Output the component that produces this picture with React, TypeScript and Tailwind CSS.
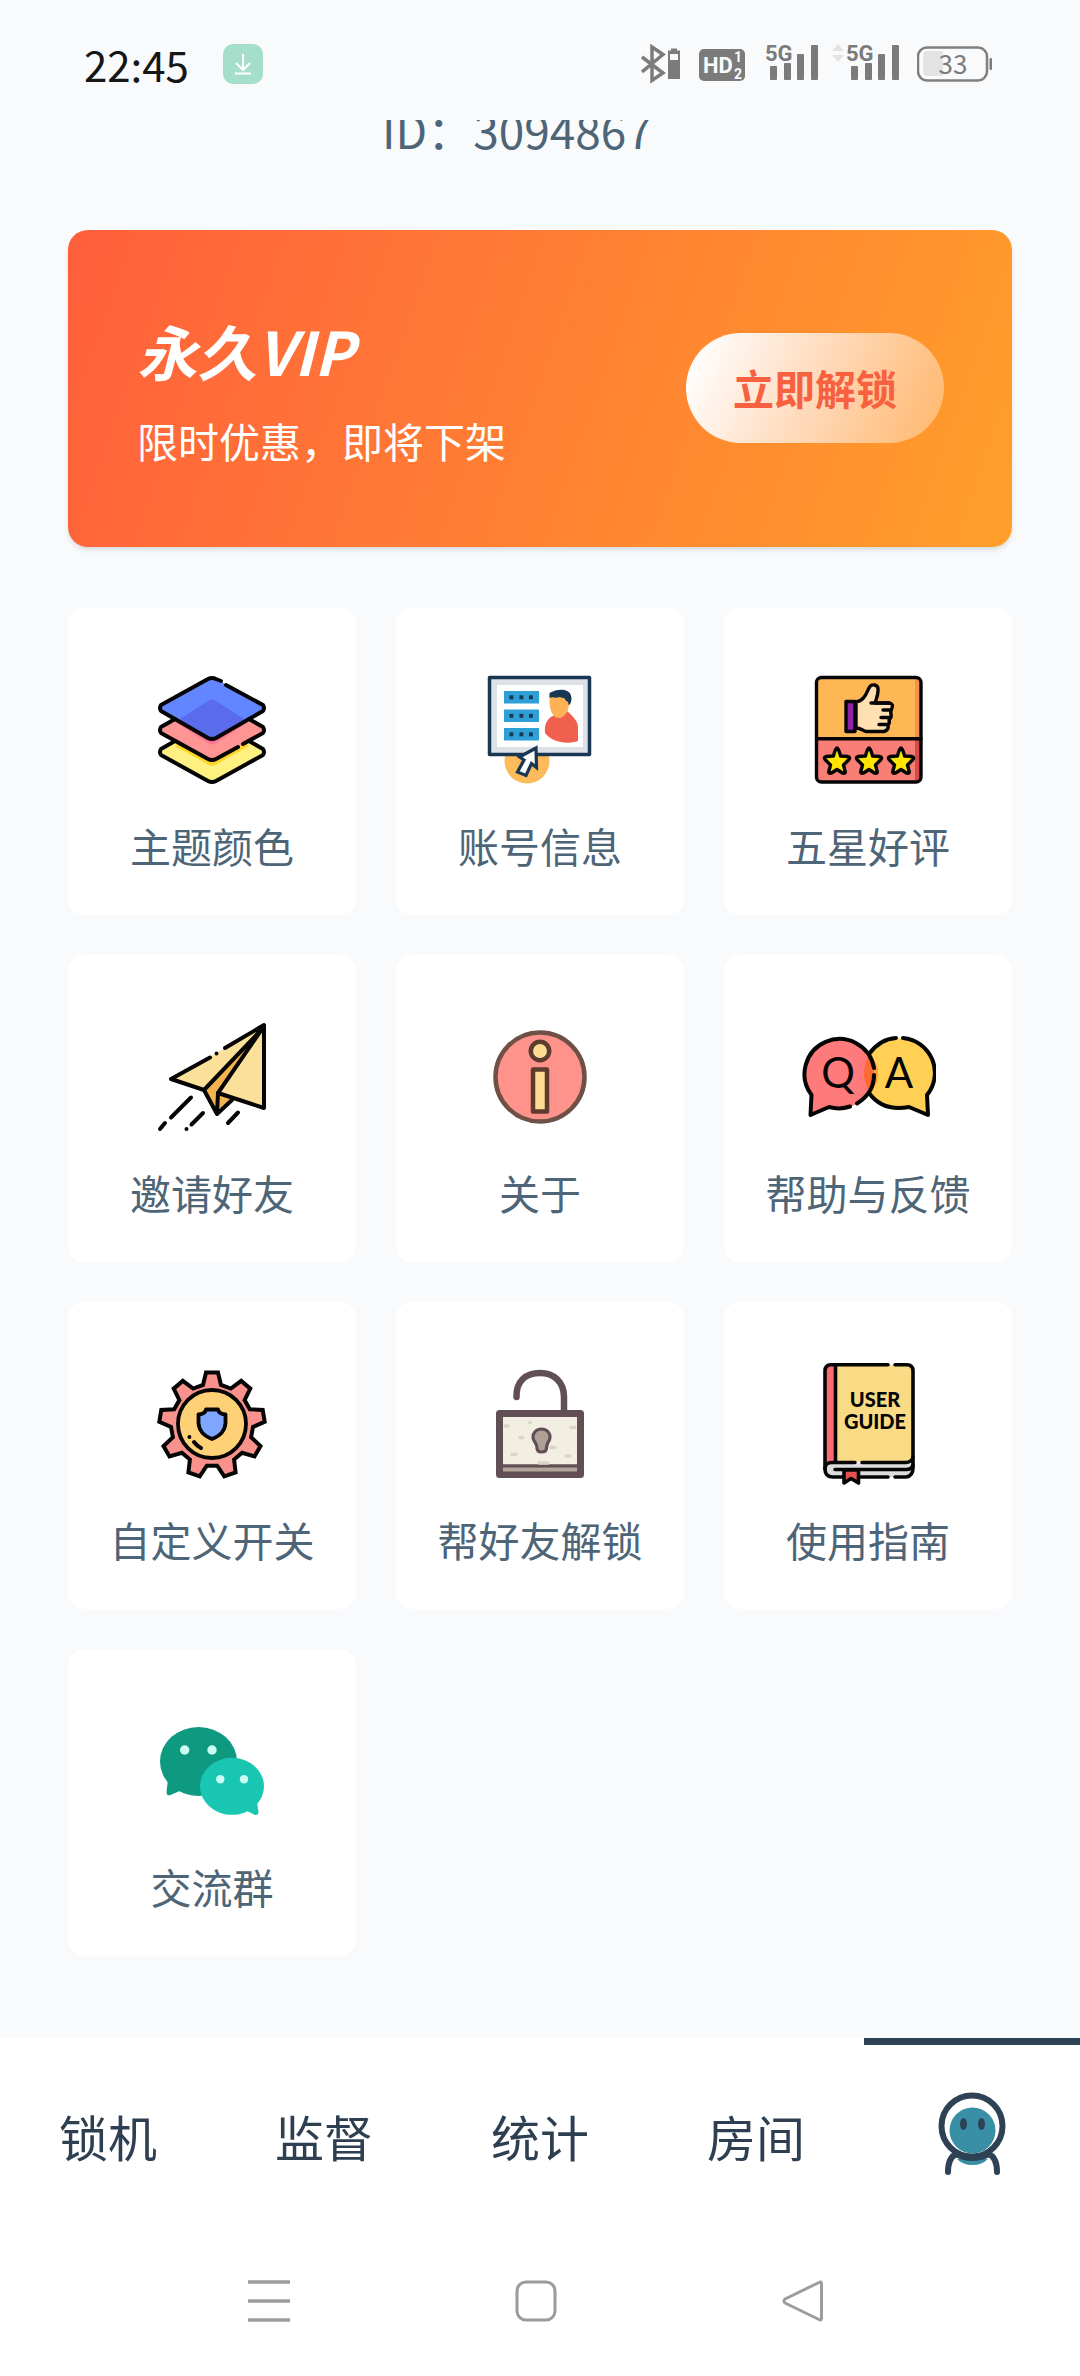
import type { ReactNode } from "react";

const INK = "#050505";

function Icon({ children }: { children: ReactNode }) {
  return (
    <svg
      viewBox="0 0 136 136"
      className="size-[136px]"
      fill="none"
      strokeLinecap="round"
      strokeLinejoin="round"
      aria-hidden="true"
    >
      {children}
    </svg>
  );
}

function LayersIcon() {
  return (
    <Icon>
      <path d="M17 87 Q15 90 17 93 L64 119 Q68 121 72 119 L119 93 Q121 90 119 87 L68 60Z" fill="#fff082" />
      <path d="M31 80 L65 99 Q68 101 71 99 L105 80 L101 76 L35 76Z" transform="translate(0 4)" fill="#ffd52a" />
      <path d="M17 65 Q15 68 17 71 L64 98 Q68 100 72 98 L119 71 Q121 68 119 65 L68 38Z" fill="#ff9494" />
      <path d="M30 59 L66 82 Q68 83 70 82 L106 59Z" fill="#ff6f91" />
      <path d="M17 43 Q15 46 17 49 L64 76 Q68 78 72 76 L119 49 Q121 46 119 43 L72 17 Q68 15 64 17Z" fill="#6186ff" />
      <path d="M34 58 L64 39 Q68 36 72 39 L102 58 L72 75 Q68 77 64 75Z" fill="#5a6cec" />
      <g stroke={INK} strokeWidth="4">
        <path d="M77 19 L72 17 Q68 15 64 17 L17 43 Q15 46 17 49 L64 76 Q68 78 72 76 L119 49 Q121 46 119 43 L82 23" />
        <path d="M31 57 L17 65 Q15 68 17 71 L64 97 Q68 99 72 97 L94 85 M99 82 L119 71 Q121 68 119 65 L105 57" />
        <path d="M31 79 L17 87 Q15 90 17 93 L64 119 Q68 121 72 119 L119 93 Q121 90 119 87 L105 79" />
      </g>
    </Icon>
  );
}

function AccountIcon() {
  return (
    <Icon>
      <circle cx="55" cy="99" r="22.5" fill="#fdbb5b" />
      <rect x="17.5" y="15.5" width="100" height="77" fill="#dfe1e8" stroke="#173753" strokeWidth="3.5" />
      <rect x="25" y="23" width="86" height="62" fill="#fff" />
      {[29, 47.5, 66].map((y) => (
        <g key={y}>
          <rect x="32" y={y} width="35" height="12.5" fill="#2f9fd8" />
          {[37.5, 47.5, 57].map((x) => (
            <rect key={x} x={x} y={y + 4.3} width="3.8" height="4" fill="#173753" />
          ))}
        </g>
      ))}
      <path d="M95 49 C102 55 106 60 106 65 L106 79 C94 83 80 80 73 71 C72 60 77 55 83 53 L88 56Z" fill="#f1604f" />
      <path d="M78 35 C76 45 80 56 87 56 C93 55 96 50 97 43 L97 34 L90 31Z" fill="#fdb355" />
      <path d="M77.5 36 V31 C86 26 99 26 99.500 36 C99.500 40 98 43 97 43 C96 42 97 39 94 39 C93 35 90 36 87 35 C84 37 81 34 77.500 36Z" fill="#173753" />
      <path d="M64 86 L47.5 95 L52 98 L45.5 110 L54 113.500 L59.500 101.500 L64.500 105.500Z" fill="#fff" stroke="#173753" strokeWidth="3.2" strokeLinejoin="miter" />
    </Icon>
  );
}

const STAR =
  "M0 -13 Q1.500 -13 3.600 -5 L11 -4.500 Q14 -3.500 11.500 -1 L6.500 4 L8.300 11 Q8 13 5.500 12 L0 8.500 L-5.500 12 Q-8 13 -8.300 11 L-6.500 4 L-11.500 -1 Q-14 -3.500 -11 -4.500 L-3.600 -5 Q-1.500 -13 0 -13Z";

function RatingIcon() {
  return (
    <Icon>
      <path d="M17 77 V21 Q17 16 22 16 H116 Q121 16 121 21 V77Z" fill="#ffb755" />
      <path d="M17 77 V115 Q17 120 22 120 H116 Q121 120 121 115 V77Z" fill="#f87e76" />
      <path d="M115 17 H121 V77 H115Z" fill="#ef9545" />
      <path d="M115 77 H121 V117 L115 119Z" fill="#d44b4b" />
      <g stroke={INK} strokeWidth="3.4">
        <rect x="16.500" y="15.500" width="104.500" height="104.500" rx="5" />
        <path d="M17 76.700 H121" />
        <path
          d="M56 40 C64 39 66 32 69 26 C71 21 79 22 78 29 C78 34 76 37 75 41 L89 41 Q94 42 92 46 Q90 49 91 52 Q92 55 89 58 Q90 61 88 63 Q89 68 84 69.500 H66 C62 68 61 66 56 66Z"
          fill="#ffe0b2"
        />
        <path d="M71 41 H89 M83 48 H91 M81 55.500 H90 M79 62.500 H88" />
        <rect x="46" y="39.500" width="9" height="30" fill="#8e24aa" />
        {[37, 69, 101].map((x) => (
          <path key={x} d={STAR} transform={`translate(${x} 99)`} fill="#ffe500" />
        ))}
      </g>
    </Icon>
  );
}

function PlaneIcon() {
  return (
    <Icon>
      <path d="M120 17 L27 70 L60 81Z M120 17 V99 L74 84Z" fill="#fbe09a" />
      <path d="M120 17 L60 81 L73 105 L89 90 L74 84Z" fill="#f3b350" />
      <g stroke={INK} strokeWidth="4">
        <path d="M81 39 L120 16 V99 L74 84 L118 20 L60 81 L27 70 L66 48.500 M72.500 44.500 V44.400" />
        <path d="M60 81 L73 105 L74 84 M73 105 L88 91" />
        <path d="M47 88.500 L27 108.500 M21 114 L16 120 M59 104 L47.500 115.500 M42.500 120 V119.900 M94 103.500 L84 114" />
      </g>
    </Icon>
  );
}

function InfoIcon() {
  return (
    <Icon>
      <circle cx="68" cy="68" r="44.500" fill="#ff938b" stroke="#6f5046" strokeWidth="4.500" />
      <g fill="#fddb93" stroke="#5d3b2e" strokeWidth="4.500">
        <circle cx="68" cy="42" r="9.200" />
        <rect x="61" y="60.500" width="14" height="42" />
      </g>
    </Icon>
  );
}

function QaIcon() {
  return (
    <Icon>
      <path d="M127 86 A35 35 0 1 0 109 98 L128 106Z" fill="#ffd054" />
      <path d="M11.500 86 A35 35 0 1 1 29 98 L10.500 106Z" fill="#ff7b7b" />
      <path d="M69 46 A35 35 0 0 1 69 82 A35 35 0 0 1 69 46Z" fill="#ff6a34" />
      <path d="M69 45 Q79 54 78 66 Q77 78 69 84 Q75 76 74.500 64 Q74 54 69 45Z" fill="#ff9a38" />
      <g stroke={INK} strokeWidth="4">
        <path d="M74 59 A35 35 0 1 0 11.500 86 L10.500 106 L29 98 Q40 101 50 97.500 M57 94.500 Q74 84 74 66" />
        <path d="M69 45 Q80 30 96 29 M103 29 A35 35 0 0 1 127 86 L128 106 L109 98 Q83 103 69 84" />
      </g>
      <g fill={INK} className="font-[Lato] text-[42px]" textAnchor="middle">
        <text x="38" y="79">Q</text>
        <text x="99" y="79">A</text>
      </g>
    </Icon>
  );
}

const GEAR = Array.from({ length: 9 }, (_, i) => {
  const a = (i * 40 * Math.PI) / 180;
  const at = (x: number, y: number) =>
    `${(68 + x * Math.cos(a) - y * Math.sin(a)).toFixed(1)} ${(69 + x * Math.sin(a) + y * Math.cos(a)).toFixed(1)}`;
  return `${i ? "L" : "M"}${at(-9, -40)} L${at(-6, -52.5)} L${at(6, -52.5)} L${at(9, -40)}`;
}).join(" ") + "Z";

function SwitchIcon() {
  return (
    <Icon>
      <path d={GEAR} fill="#f9928c" stroke={INK} strokeWidth="4" strokeLinejoin="miter" />
      <circle cx="68" cy="68" r="34" fill="#ffd176" stroke={INK} strokeWidth="3.800" />
      <path
        d="M62 53.500 H74 Q75 58 81.500 58.500 V67 C81 75 76 80 68 83 C60 80 55 75 54.500 67 V58.500 Q61 58 62 53.500Z"
        fill="#7fa6ff"
        stroke={INK}
        strokeWidth="3.800"
      />
      <path d="M45.400 81 V80.900 M50 86 Q53 90 57 92" stroke={INK} strokeWidth="4" />
    </Icon>
  );
}

function UnlockIcon() {
  return (
    <Icon>
      <path d="M44.500 41 C44 25 54 17 68 17 C82 17 92 26 92 41 V56" stroke="#614f55" strokeWidth="6.500" />
      <rect x="27.500" y="57.500" width="81" height="61" fill="#f2eee1" stroke="#614f55" strokeWidth="7" />
      <path d="M31 112 H105 V115.500 H31Z" fill="#b3a597" />
      <path d="M31 110 H105" stroke="#614f55" strokeWidth="3.500" />
      <path
        d="M33 70 H36 M99 71.500 H103 M48 81.500 H51 M40 98.500 H44 M94 100 H98 M79 91.500 H83 M67 107 H76 M58 66.500 V66.400"
        stroke="#d9d7c2"
        strokeWidth="3.500"
      />
      <path
        d="M69.500 73 C75 73 78 77 78 81 C78 86 74.500 86 74.500 92 C74.500 95 72 96 69.500 96 C67 96 65 95 65 92 C65 86 61 86 61 81 C61 77 64 73 69.500 73Z"
        fill="#b0a094"
        stroke="#614f55"
        strokeWidth="3.200"
      />
    </Icon>
  );
}

function GuideIcon() {
  return (
    <Icon>
      <path d="M35 9 H107 Q113 9 113 15 V106 H35Z" fill="#f9da85" />
      <path d="M25 112 V15 Q25 9 31 9 H35 V106 Q27 106 25 112Z" fill="#fb6b70" />
      <path d="M113 104 Q112 107 107 107 H34 Q26 107 26 114 Q26 121 34 121 H107 Q113 121 113 114Z" fill="#dddde0" />
      <g stroke={INK} strokeWidth="3.600">
        <path d="M88 8.800 H31 Q25 9 25 15 V113 Q25 121 33 121 H88 M95 121 H106 Q113 120 113 112 V15 Q113 9 107 8.800 H95" />
        <path d="M35.500 9 V106 M25 113 Q25 106 33 106.500 H55 M62 106.500 H106 Q112 106 113 101 M35 113.500 H107 Q112 113 113 109" />
        <path d="M44 114 V127 L51 122.500 L58.500 127 V114Z" fill="#e2504f" />
      </g>
      <g fill={INK} className="font-[Lato] text-[20px] font-black" textAnchor="middle">
        <text x="75" y="51">USER</text>
        <text x="75" y="73">GUIDE</text>
      </g>
    </Icon>
  );
}

function ChatIcon() {
  return (
    <Icon>
      <g fill="#0d9a80">
        <ellipse cx="54.500" cy="58.500" rx="38.500" ry="34.500" />
        <path d="M24 76 L22.500 89 Q22.500 93 26.500 92 L38 87Z" />
      </g>
      <g fill="#19c6b2">
        <ellipse cx="88" cy="83.300" rx="32" ry="28.500" />
        <path d="M113 99 L114.500 109 Q114.500 112.500 111 112 L101 107Z" />
      </g>
      <g fill="#cbfdf5">
        <circle cx="40.700" cy="47" r="4.700" />
        <circle cx="68" cy="47" r="4.700" />
        <circle cx="76.300" cy="76.300" r="4.200" />
        <circle cx="100" cy="76.300" r="4.200" />
      </g>
    </Icon>
  );
}

const FEATURES = [
  { label: "主题颜色", icon: <LayersIcon /> },
  { label: "账号信息", icon: <AccountIcon /> },
  { label: "五星好评", icon: <RatingIcon /> },
  { label: "邀请好友", icon: <PlaneIcon /> },
  { label: "关于", icon: <InfoIcon /> },
  { label: "帮助与反馈", icon: <QaIcon /> },
  { label: "自定义开关", icon: <SwitchIcon /> },
  { label: "帮好友解锁", icon: <UnlockIcon /> },
  { label: "使用指南", icon: <GuideIcon /> },
  { label: "交流群", icon: <ChatIcon /> },
];

function SignalBars({ x }: { x: number }) {
  return (
    <g>
      <text x={x - 1} y="17" className="font-[Roboto] text-[22px] font-bold">5G</text>
      <rect x={x + 4} y="22" width="7" height="14" rx="1" />
      <rect x={x + 18} y="19" width="7" height="17" rx="1" />
      <rect x={x + 31} y="10" width="7" height="26" rx="1" />
      <rect x={x + 45} y="1" width="7" height="35" rx="1" />
    </g>
  );
}

function StatusBar() {
  return (
    <header className="flex h-[120px] items-center justify-between pt-[8px] pr-[88px] pl-[84px]">
      <div className="flex items-center gap-[34px]">
        <time className="text-[42px] leading-[48px] text-[#161616]">22:45</time>
        <svg viewBox="0 0 40 40" className="size-10" aria-hidden="true">
          <rect width="40" height="40" rx="10" fill="#a5dfcb" />
          <path d="M20 10 V26 M13 19 L20 26 L27 19 M12 29.500 H28" fill="none" stroke="#fff" strokeWidth="2" />
        </svg>
      </div>
      <div className="flex items-center gap-[18px] fill-[#7b7b7b]">
        <svg viewBox="0 0 40 40" className="h-10 w-10" aria-hidden="true">
          <path d="M1 13 L22 29 L11 36.500 V3 L22 10.500 L1 28" fill="none" stroke="#7b7b7b" strokeWidth="3.500" />
          <path d="M30 4.500 H36 V6.500 H39 V35 H27 V6.500 H30Z" />
          <path d="M29 10 H37 V16 H29Z" fill="#f9fafc" />
        </svg>
        <svg viewBox="0 0 46 40" className="h-10 w-[46px]" aria-hidden="true">
          <rect y="5" width="46" height="32" rx="5" />
          <g fill="#f9fafc" className="font-[Roboto] font-bold">
            <text x="4" y="29" className="text-[22px]">HD</text>
            <text x="35" y="18" className="text-[14px]">1</text>
            <text x="35" y="35" className="text-[14px]">2</text>
          </g>
        </svg>
        <svg viewBox="0 -6 136 52" className="h-[52px] w-[136px]" aria-hidden="true">
          <SignalBars x={3} />
          <path d="M69 7 L75 0 L81 7Z M69 11 H81 L75 18Z" fill="#e3e3e4" />
          <SignalBars x={84} />
        </svg>
        <svg viewBox="0 0 75 40" className="h-10 w-[75px]" aria-hidden="true">
          <path d="M10 7 H26 V32 H10 Q6 32 6 27 V12 Q6 7 10 7Z" fill="#e2e3e5" />
          <rect x="1" y="3.500" width="69" height="33" rx="9" fill="none" stroke="#7f7f7f" strokeWidth="2.500" />
          <rect x="72.500" y="14" width="2.500" height="12" rx="1" />
          <text x="36" y="30" textAnchor="middle" className="text-[26px]">33</text>
        </svg>
      </div>
    </header>
  );
}

function AstronautIcon() {
  return (
    <svg viewBox="0 0 68 84" className="h-[84px] w-[68px]" fill="none" strokeLinecap="round" aria-hidden="true">
      <path d="M19 67 H50 Q44 73 34.500 73 Q25 73 19 67Z" fill="#398fa5" />
      <circle cx="34" cy="34" r="30.500" stroke="#2f4155" strokeWidth="6" />
      <circle cx="34.500" cy="38.500" r="23" fill="#398fa5" />
      <ellipse cx="25.500" cy="32" rx="3.500" ry="6" fill="#2f4155" />
      <ellipse cx="43.500" cy="32" rx="3.500" ry="6" fill="#2f4155" />
      <path d="M10 80 Q10 66 18 62 Q34 70 51 62 Q59 66 59 80" stroke="#2f4155" strokeWidth="6" />
    </svg>
  );
}

const TABS = ["锁机", "监督", "统计", "房间"];

export default function App() {
  return (
    <div className="flex min-h-screen flex-col bg-[#f9fafc] font-['Noto_Sans_CJK_SC',sans-serif] text-[#4e6577]">
      <StatusBar />
      <main className="flex-1 overflow-hidden px-[68px]">
        <p className="-mt-[19px] mb-[73px] pr-[46px] text-center text-[46px] leading-[56px]">ID：3094867</p>

        <section className="flex items-center justify-between rounded-[20px] bg-[linear-gradient(109deg,#ff5f3c,#ff9f2a)] pt-[78px] pr-[68px] pb-[79px] pl-[69px] shadow-md">
          <div className="text-white">
            <h1 className="text-[60px] leading-[84px] font-bold italic">永久VIP</h1>
            <p className="mt-5 text-[41px] leading-[56px]">限时优惠，即将下架</p>
          </div>
          <button
            type="button"
            className="h-[110px] rounded-full bg-[linear-gradient(113deg,#ffffff_5%,#ffffff4d)] px-[47px] text-[41px] font-bold text-[#f8613f]"
          >
            立即解锁
          </button>
        </section>

        <section className="mt-[61px] grid grid-cols-3 gap-10">
          {FEATURES.map(({ label, icon }) => (
            <button
              key={label}
              type="button"
              className="flex flex-col items-center rounded-2xl bg-white pt-[54px] pb-[46px]"
            >
              {icon}
              <span className="mt-[23px] text-[41px] leading-[48px]">{label}</span>
            </button>
          ))}
        </section>
      </main>

      <footer className="bg-white">
        <nav className="grid h-[200px] grid-cols-5">
          {TABS.map((tab) => (
            <button key={tab} type="button" className="pb-1 text-[49px] text-[#2d3f50]">
              {tab}
            </button>
          ))}
          <button
            type="button"
            aria-label="我的"
            aria-current="page"
            className="flex items-center justify-center border-t-[7px] border-[#2f4155] pb-4"
          >
            <AstronautIcon />
          </button>
        </nav>
        <div className="grid h-[138px] grid-cols-3 items-center justify-items-center pr-[144px] pb-3 pl-[135px]">
          <button type="button" aria-label="最近任务">
            <svg viewBox="0 0 42 42" className="size-[42px]" stroke="#9c9c9c" strokeWidth="3.500">
              <path d="M0 2 H42 M0 21 H42 M0 40 H42" />
            </svg>
          </button>
          <button type="button" aria-label="主页">
            <svg viewBox="0 0 42 42" className="size-[42px]" fill="none" stroke="#9c9c9c" strokeWidth="3">
              <rect x="2" y="2" width="38" height="38" rx="9" />
            </svg>
          </button>
          <button type="button" aria-label="返回">
            <svg viewBox="0 0 42 42" className="size-[42px]" fill="none" stroke="#9c9c9c" strokeWidth="3" strokeLinejoin="round">
              <path d="M37 2.500 Q39.500 1 39.500 4 V38 Q39.500 41 37 39.500 L3 23 Q1 21 3 19Z" />
            </svg>
          </button>
        </div>
      </footer>
    </div>
  );
}
